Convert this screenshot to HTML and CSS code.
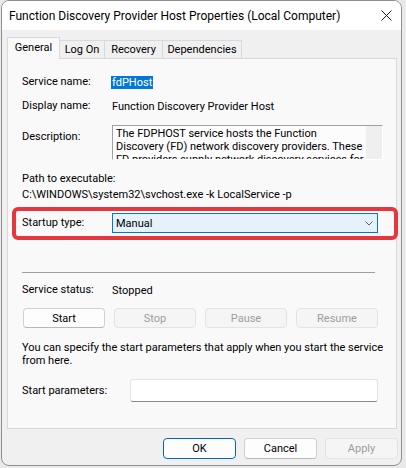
FILE: index.html
```html
<!DOCTYPE html>
<html lang="en">
<head>
<meta charset="utf-8">
<title>Function Discovery Provider Host Properties</title>
<link rel="stylesheet" href="styles.css">
</head>
<body>
<div class="window">
  <div class="titlebar">
    <span class="title">Function Discovery Provider Host Properties (Local Computer)</span>
    <svg class="close" width="11" height="11" viewBox="0 0 11 11"><path d="M0.5 0.5L10.5 10.5M10.5 0.5L0.5 10.5" stroke="#1a1a1a" stroke-width="1" fill="none"/></svg>
  </div>
  <div class="body">
    <div class="tabs">
      <div class="tab active t-general">General</div>
      <div class="tab t-logon">Log On</div>
      <div class="tab t-recovery">Recovery</div>
      <div class="tab t-deps">Dependencies</div>
    </div>
    <div class="panel">
      <div class="row row-service"><span class="label">Service name:</span><span class="selected">fdPHost</span></div>
      <div class="row row-display"><span class="label">Display name:</span><span>Function Discovery Provider Host</span></div>
      <div class="row row-desc">
        <span class="label">Description:</span>
        <div class="desc">
          <div class="desc-text">The FDPHOST service hosts the Function<br>Discovery (FD) network discovery providers. These<br>FD providers supply network discovery services for</div>
          <div class="desc-scroll"></div>
        </div>
      </div>
      <div class="path-label">Path to executable:</div>
      <div class="path-value">C:\WINDOWS\system32\svchost.exe -k LocalService -p</div>
      <div class="row row-startup">
        <span class="label">Startup type:</span>
        <div class="select">
          <span>Manual</span>
          <svg width="8" height="5" viewBox="0 0 8 5"><path d="M0.5 0.5L4 4L7.5 0.5" stroke="#5c5c5c" stroke-width="1" fill="none"/></svg>
        </div>
      </div>
      <div class="sep"></div>
      <div class="row row-status"><span class="label">Service status:</span><span>Stopped</span></div>
      <div class="svc-buttons">
        <button class="btn">Start</button>
        <button class="btn disabled">Stop</button>
        <button class="btn disabled">Pause</button>
        <button class="btn disabled">Resume</button>
      </div>
      <p class="help">You can specify the start parameters that apply when you start the service<br>from here.</p>
      <div class="row row-params">
        <span class="label params-label">Start parameters:</span>
        <div class="input"></div>
      </div>
    </div>
    <div class="footer">
      <button class="btn fbtn default">OK</button>
      <button class="btn fbtn">Cancel</button>
      <button class="btn fbtn disabled">Apply</button>
    </div>
  </div>
</div>
</body>
</html>
```

FILE: styles.css
```css
* { box-sizing: border-box; }

body {
  margin: 0;
  background: #e9e9e9;
  font-family: Roboto, "Liberation Sans", sans-serif;
  font-size: 11px;
  color: #000;
}

.window {
  margin-left: 1px;
  width: 401px;
  height: 466px;
  border: 1px solid #8f8f8f;
  border-radius: 8px;
  background: #f0f0f0;
  overflow: hidden;
  display: flex;
  flex-direction: column;
}

.titlebar {
  flex: none;
  height: 29px;
  background: #fff;
  display: flex;
  align-items: center;
  justify-content: space-between;
  padding: 0 9px 0 7px;
  font-size: 12px;
}

.body {
  flex: 1;
  display: flex;
  flex-direction: column;
  padding: 7px 4px 0 5px;
}

.tabs {
  display: flex;
  align-items: flex-end;
  height: 22px;
  margin-bottom: -1px;
  position: relative;
  z-index: 1;
}

.tab {
  height: 18px;
  margin-bottom: 1px;
  margin-left: -1px;
  border: 1px solid #d9d9d9;
  border-bottom: none;
  background: #f0f0f0;
  display: flex;
  align-items: center;
  justify-content: center;
}

.tab.active {
  height: 22px;
  margin-bottom: 0;
  margin-left: 0;
  background: #f9f9f9;
  padding-bottom: 3px;
}

.t-general { width: 53px; }
.t-logon { width: 46px; }
.t-recovery { width: 59px; }
.t-deps { width: 80px; }

.panel {
  height: 371px;
  border: 1px solid #d9d9d9;
  background: #f9f9f9;
  padding: 0 18px 0 14px;
}

.row {
  display: flex;
  align-items: center;
}

.label {
  flex: none;
  width: 90px;
  line-height: 16px;
}

.row-service { margin-top: 15px; height: 16px; }

.selected {
  display: inline-block;
  margin-left: -1px;
  padding: 0 1px;
  line-height: 13px;
  background: #0078d7;
  color: #fff;
}

.row-display { margin-top: 8px; height: 16px; }

.row-desc {
  margin-top: 11px;
  align-items: flex-start;
}

.row-desc .label { padding-top: 4px; line-height: 16px; }

.desc {
  flex: 1;
  height: 35px;
  display: flex;
  background: #fcfcfc;
  border-top: 1px solid #a0a0a0;
  border-left: 1px solid #a0a0a0;
  border-right: 1px solid #fff;
  border-bottom: 1px solid #fff;
}

.desc-text {
  flex: 1;
  padding: 1px 3px;
  line-height: 13px;
  overflow: hidden;
  white-space: nowrap;
}

.desc-scroll {
  width: 16px;
  background: #efefef;
}

.path-label { margin-top: 11px; line-height: 16px; }
.path-value { line-height: 16px; }

.row-startup {
  margin-top: 10px;
  height: 20px;
  position: relative;
}

.row-startup::before {
  content: "";
  position: absolute;
  left: -10px;
  right: -20px;
  top: -6px;
  bottom: -7px;
  border: 4px solid #e5383e;
  border-radius: 6px;
  pointer-events: none;
}

.select {
  flex: 1;
  height: 20px;
  border: 1px solid #0078d7;
  background: #e5f1fb;
  display: flex;
  align-items: center;
  justify-content: space-between;
  padding: 0 4px 0 3px;
}

.sep {
  margin-top: 39px;
  margin-right: 3px;
  border-top: 1px solid #a0a0a0;
}

.row-status { margin-top: 9px; height: 16px; }

.svc-buttons {
  margin-top: 10px;
  padding-left: 1px;
  display: flex;
  gap: 9px;
}

.btn {
  width: 82px;
  height: 20px;
  padding: 0;
  font: inherit;
  color: #000;
  background: #fdfdfd;
  border: 1px solid #d0d0d0;
  border-bottom-color: #b8b8b8;
  border-radius: 4px;
}

.btn.disabled {
  color: #9d9d9d;
  background: #f5f5f5;
  border-color: #e3e3e3;
}

.btn.default {
  border-color: #0067c0;
}

.help {
  margin: 13px 0 0;
  line-height: 13px;
  white-space: nowrap;
}

.row-params { margin-top: 12px; height: 23px; }

.params-label { width: 108px; }

.input {
  flex: 1;
  height: 23px;
  background: #fff;
  border: 1px solid #e3e3e3;
  border-bottom-color: #8a8a8a;
  border-radius: 3px;
}

.footer {
  margin-top: 9px;
  margin-right: -1px;
  display: flex;
  justify-content: flex-end;
  gap: 8px;
}

.fbtn {
  width: 73px;
  height: 21px;
}
```
